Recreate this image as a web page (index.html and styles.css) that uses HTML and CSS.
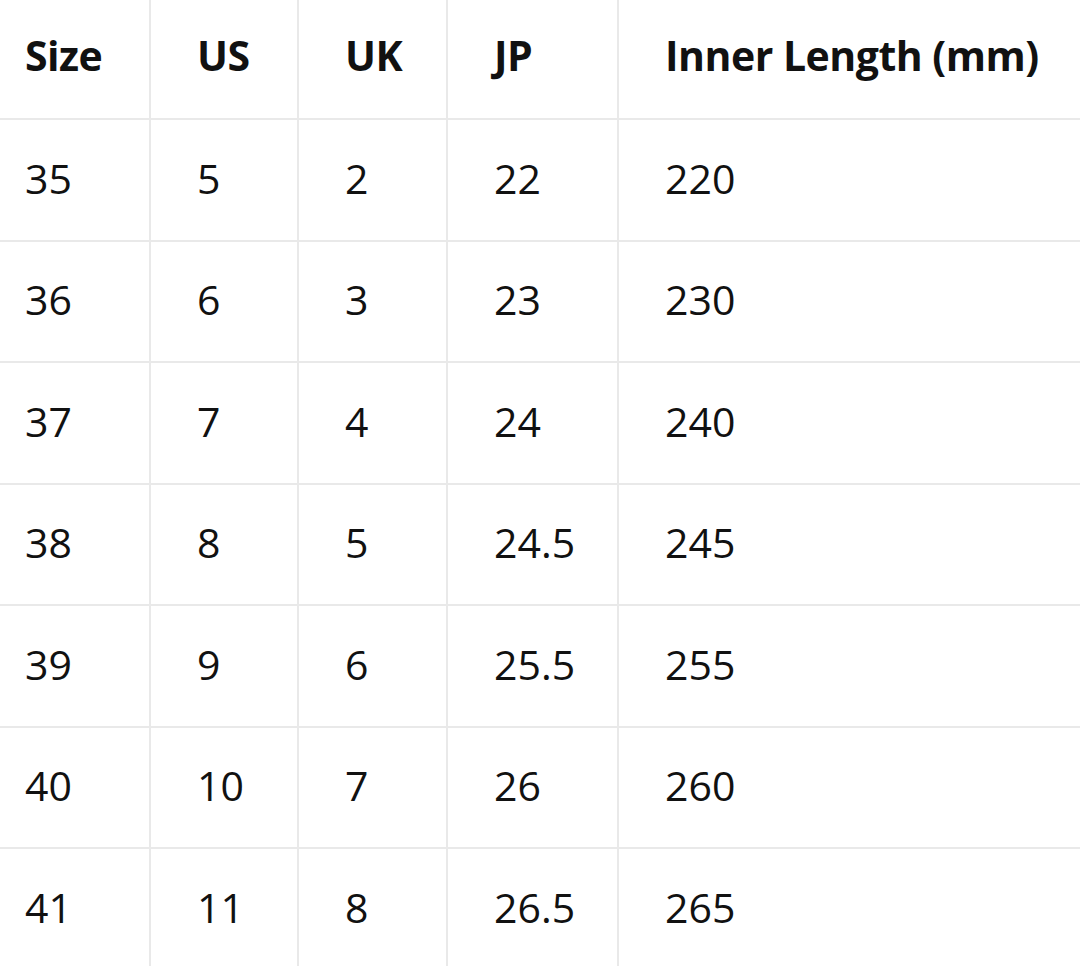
FILE: index.html
```html
<!DOCTYPE html>
<html lang="en">
<head>
    <meta charset="UTF-8">
    <meta name="viewport" content="width=device-width, initial-scale=1.0">
    <title>Size Chart</title>
    <link rel="stylesheet" href="styles.css">
</head>
<body>
    <div class="chart-wrap">
        <table class="size-chart">
            <colgroup>
                <col class="col-size">
                <col class="col-us">
                <col class="col-uk">
                <col class="col-jp">
                <col class="col-len">
            </colgroup>
            <thead>
                <tr>
                    <th>Size</th>
                    <th>US</th>
                    <th>UK</th>
                    <th>JP</th>
                    <th>Inner Length (mm)</th>
                </tr>
            </thead>
            <tbody>
                <tr><td>35</td><td>5</td><td>2</td><td>22</td><td>220</td></tr>
                <tr><td>36</td><td>6</td><td>3</td><td>23</td><td>230</td></tr>
                <tr><td>37</td><td>7</td><td>4</td><td>24</td><td>240</td></tr>
                <tr><td>38</td><td>8</td><td>5</td><td>24.5</td><td>245</td></tr>
                <tr><td>39</td><td>9</td><td>6</td><td>25.5</td><td>255</td></tr>
                <tr><td>40</td><td>10</td><td>7</td><td>26</td><td>260</td></tr>
                <tr><td>41</td><td>11</td><td>8</td><td>26.5</td><td>265</td></tr>
            </tbody>
        </table>
    </div>
</body>
</html>
```

FILE: styles.css
```css
body {
    margin: 0;
    background-color: #fff;
    font-family: 'Open Sans', 'Noto Sans', sans-serif;
    color: #111;
}

.chart-wrap {
    width: 1080px;
    height: 966px;
    overflow: hidden;
}

.size-chart {
    margin-left: -21px;
    width: 1160px;
    table-layout: fixed;
    border-collapse: separate;
    border-spacing: 0;
}

.col-size { width: 172px; }
.col-us { width: 148px; }
.col-uk { width: 149px; }
.col-jp { width: 171px; }
.col-len { width: 520px; }

.size-chart th,
.size-chart td {
    box-sizing: border-box;
    padding: 0 0 4px 46px;
    text-align: left;
    vertical-align: middle;
    border-right: 2px solid #e9e9e9;
    border-bottom: 2px solid #e9e9e9;
    font-size: 41px;
    white-space: nowrap;
}

.size-chart th:last-child,
.size-chart td:last-child {
    border-right: none;
}

.size-chart th {
    height: 120px;
    padding-bottom: 8px;
    font-weight: 700;
    letter-spacing: -0.5px;
}

.size-chart td {
    height: 121.5px;
    font-weight: 400;
}
```
